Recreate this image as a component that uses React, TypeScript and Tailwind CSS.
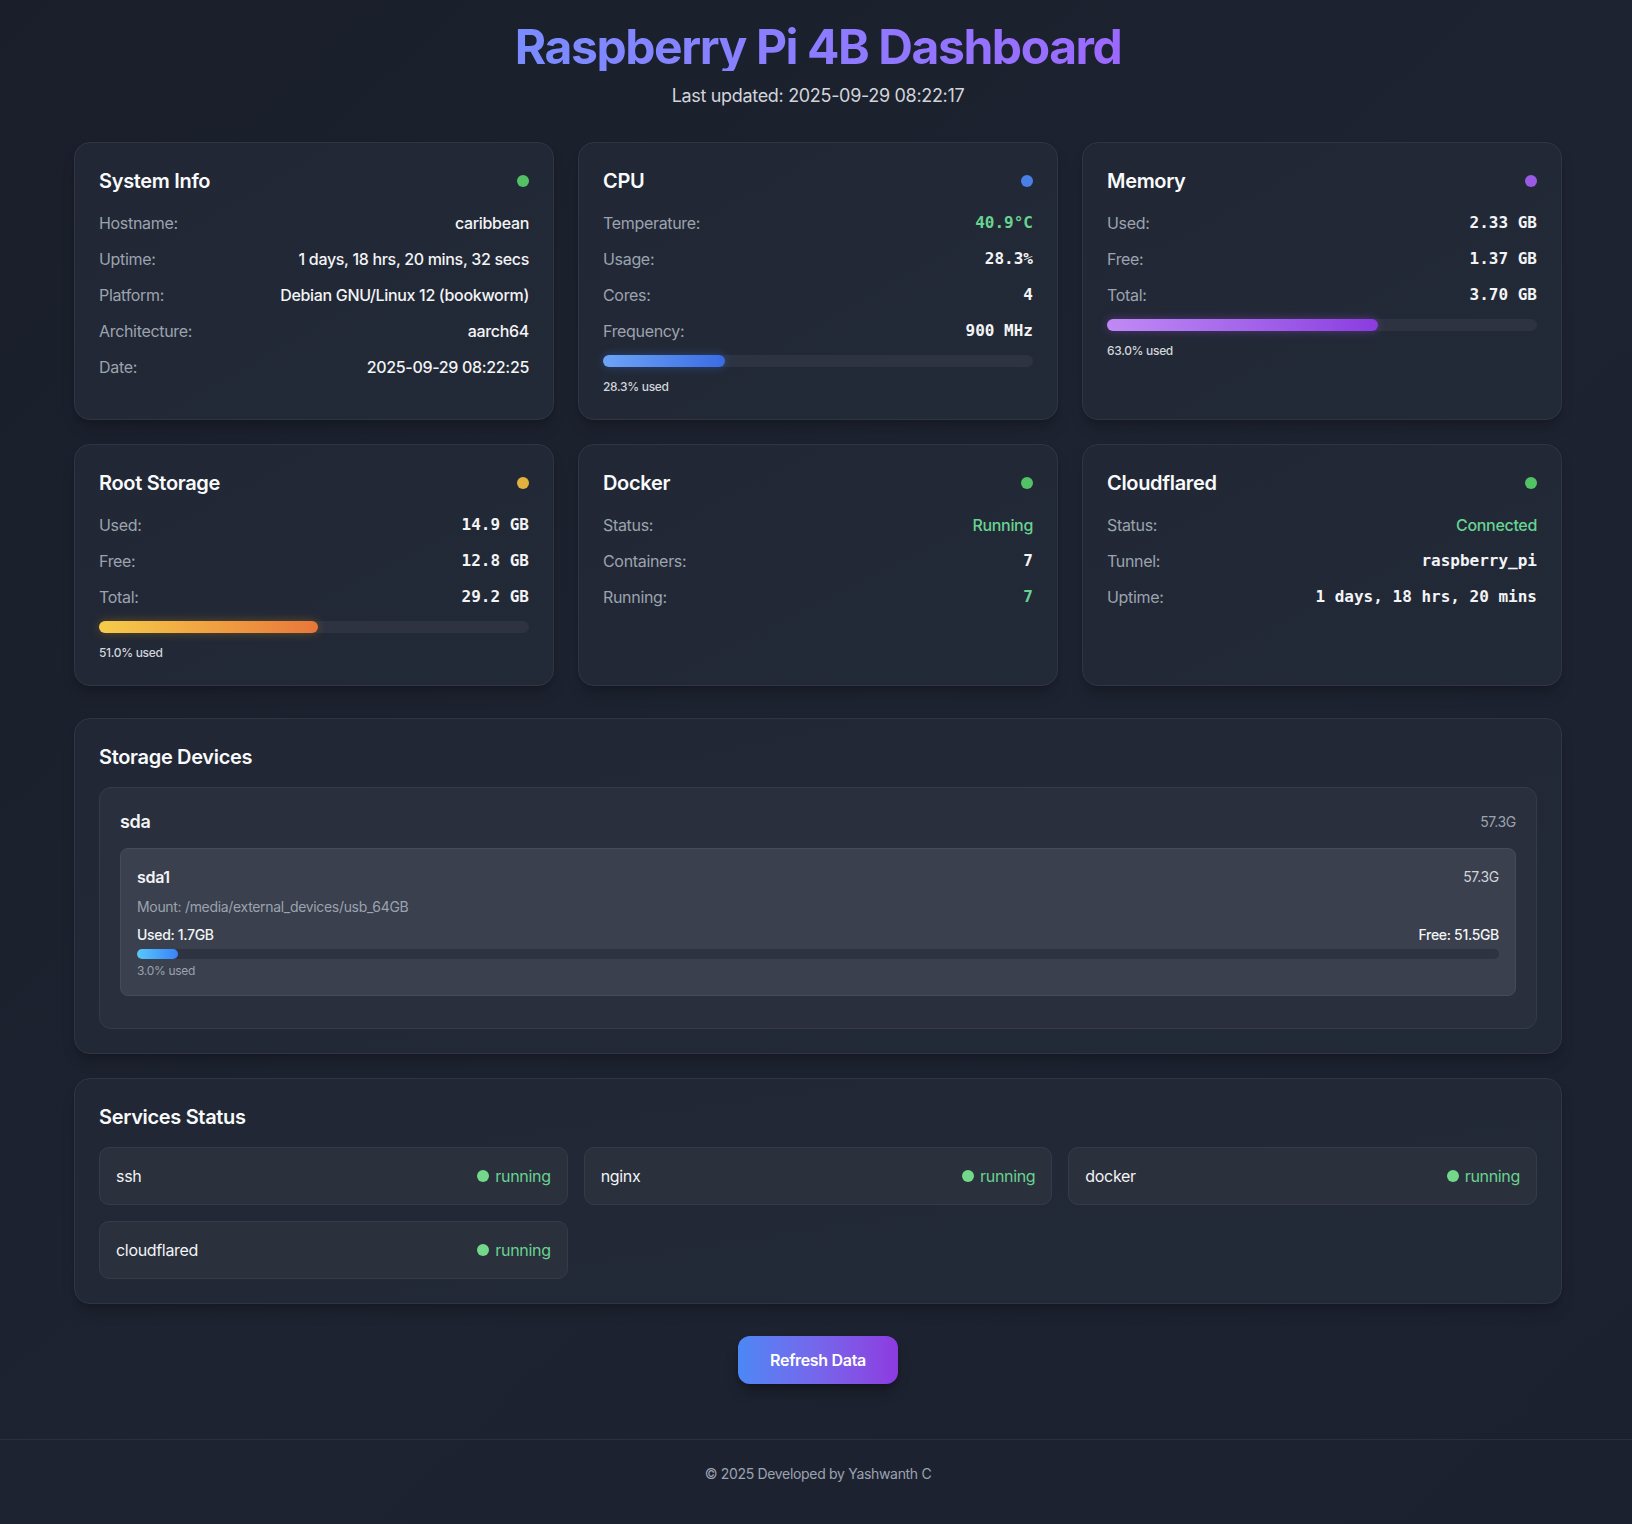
import React from "react";

type Row = { label: string; value: string; mono?: boolean; green?: boolean };

const Card = ({
  title,
  dot,
  rows,
  bar,
}: {
  title: string;
  dot: string;
  rows: Row[];
  bar?: { pct: number; fill: string; glow: string };
}) => {
  return (
    <div className="rounded-2xl border border-[#2f3542] bg-linear-to-br from-[#212734] to-[#232a37] p-6 shadow-lg shadow-black/20">
      <div className="mb-[10px] flex h-7 items-center justify-between">
        <h3 className="text-xl leading-7 font-semibold text-[#f9fafb]">{title}</h3>
        <span className={`h-3 w-3 rounded-full ${dot}`} />
      </div>
      {rows.map((r) => (
        <div key={r.label} className="flex h-9 items-center justify-between text-base">
          <span className="text-[#9ca3af]">{r.label}</span>
          <span
            className={
              (r.mono
                ? "font-['DejaVu_Sans_Mono',monospace] font-semibold tracking-normal "
                : "font-medium ") + (r.green ? "text-[#68d391]" : "text-[#f3f4f6]")
            }
          >
            {r.value}
          </span>
        </div>
      ))}
      {bar && (
        <>
          <div className="mt-1.5 h-3 w-full rounded-full bg-[#2d3341]">
            <div
              className={`h-3 rounded-full ${bar.fill} ${bar.glow}`}
              style={{ width: `${bar.pct}%` }}
            />
          </div>
          <div className="mt-3 text-xs leading-4 font-medium text-[#d1d5db]">
            {bar.pct.toFixed(1)}% used
          </div>
        </>
      )}
    </div>
  );
};

const services = ["ssh", "nginx", "docker", "cloudflared"];

export default function App() {
  return (
    <div className="min-h-screen bg-linear-to-br from-[#191e2a] via-[#1e2331] to-[#1c2130] font-['Inter','Noto_Sans',sans-serif] tracking-[-0.02em] text-[#f3f4f6]">
      <div className="pt-[23px] pr-[70px] pl-[74px]">
        <header className="mb-8 text-center">
          <h1 className="bg-linear-to-r from-blue-400 to-purple-500 bg-clip-text text-5xl leading-none font-bold tracking-[-0.03em] text-transparent">
            Raspberry Pi 4B Dashboard
          </h1>
          <p className="mt-[11px] text-lg leading-7 text-[#d1d5db]">
            Last updated: 2025-09-29 08:22:17
          </p>
        </header>

        <div className="grid grid-cols-3 gap-6">
          <Card
            title="System Info"
            dot="bg-[#52c265]"
            rows={[
              { label: "Hostname:", value: "caribbean" },
              { label: "Uptime:", value: "1 days, 18 hrs, 20 mins, 32 secs" },
              { label: "Platform:", value: "Debian GNU/Linux 12 (bookworm)" },
              { label: "Architecture:", value: "aarch64" },
              { label: "Date:", value: "2025-09-29 08:22:25" },
            ]}
          />
          <Card
            title="CPU"
            dot="bg-[#4a7fe8]"
            rows={[
              { label: "Temperature:", value: "40.9°C", mono: true, green: true },
              { label: "Usage:", value: "28.3%", mono: true },
              { label: "Cores:", value: "4", mono: true },
              { label: "Frequency:", value: "900 MHz", mono: true },
            ]}
            bar={{
              pct: 28.3,
              fill: "bg-linear-to-r from-[#6ea4f7] to-[#3b6be3]",
              glow: "shadow-[0_0_10px_rgba(59,130,246,0.35)]",
            }}
          />
          <Card
            title="Memory"
            dot="bg-[#9b5ae6]"
            rows={[
              { label: "Used:", value: "2.33 GB", mono: true },
              { label: "Free:", value: "1.37 GB", mono: true },
              { label: "Total:", value: "3.70 GB", mono: true },
            ]}
            bar={{
              pct: 63.0,
              fill: "bg-linear-to-r from-[#c08af5] to-[#8b3be0]",
              glow: "shadow-[0_0_10px_rgba(168,85,247,0.35)]",
            }}
          />
          <Card
            title="Root Storage"
            dot="bg-[#e2b33c]"
            rows={[
              { label: "Used:", value: "14.9 GB", mono: true },
              { label: "Free:", value: "12.8 GB", mono: true },
              { label: "Total:", value: "29.2 GB", mono: true },
            ]}
            bar={{
              pct: 51.0,
              fill: "bg-linear-to-r from-[#f5cc4a] to-[#e8763a]",
              glow: "shadow-[0_0_10px_rgba(245,158,11,0.3)]",
            }}
          />
          <Card
            title="Docker"
            dot="bg-[#52c265]"
            rows={[
              { label: "Status:", value: "Running", green: true },
              { label: "Containers:", value: "7", mono: true },
              { label: "Running:", value: "7", mono: true, green: true },
            ]}
          />
          <Card
            title="Cloudflared"
            dot="bg-[#52c265]"
            rows={[
              { label: "Status:", value: "Connected", green: true },
              { label: "Tunnel:", value: "raspberry_pi", mono: true },
              { label: "Uptime:", value: "1 days, 18 hrs, 20 mins", mono: true },
            ]}
          />
        </div>

        {/* storage devices */}
        <section className="mt-8 rounded-2xl border border-[#2f3542] bg-linear-to-br from-[#212734] to-[#232a37] p-6 shadow-lg shadow-black/20">
          <h2 className="mb-4 text-xl leading-7 font-semibold text-[#f9fafb]">Storage Devices</h2>
          <div className="rounded-xl border border-[#353b48] bg-[#292f3c] p-5">
            <div className="mb-3 flex items-center justify-between">
              <span className="text-lg leading-7 font-semibold">sda</span>
              <span className="text-sm text-[#9ca3af]">57.3G</span>
            </div>
            <div className="mb-3 rounded-lg border border-[#454b58] bg-[#3a404d] p-4">
              <div className="flex items-center justify-between">
                <span className="text-base leading-6 font-semibold">sda1</span>
                <span className="text-sm text-[#d1d5db]">57.3G</span>
              </div>
              <div className="mt-2 text-sm text-[#9ca3af]">
                Mount: /media/external_devices/usb_64GB
              </div>
              <div className="mt-2 flex justify-between text-sm font-medium">
                <span>Used: 1.7GB</span>
                <span>Free: 51.5GB</span>
              </div>
              <div className="mt-1 h-2.5 w-full rounded-full bg-[#2d3341]">
                <div
                  className="h-2.5 rounded-full bg-linear-to-r from-[#5ac8fa] to-[#3b82f6]"
                  style={{ width: "3%" }}
                />
              </div>
              <div className="mt-1 text-xs leading-4 text-[#9ca3af]">3.0% used</div>
            </div>
          </div>
        </section>

        {/* services */}
        <section className="mt-6 rounded-2xl border border-[#2f3542] bg-linear-to-br from-[#212734] to-[#232a37] p-6 shadow-lg shadow-black/20">
          <h2 className="mb-4 text-xl leading-7 font-semibold text-[#f9fafb]">Services Status</h2>
          <div className="grid grid-cols-3 gap-4">
            {services.map((s) => (
              <div
                key={s}
                className="flex items-center justify-between rounded-[10px] border border-[#353b48] bg-[#2a303c] p-4"
              >
                <span className="text-base leading-6">{s}</span>
                <span className="flex items-center gap-1.5 text-base text-[#68d391]">
                  <span className="h-3 w-3 rounded-full bg-[#72d98a]" />
                  running
                </span>
              </div>
            ))}
          </div>
        </section>

        <div className="mt-8 flex justify-center">
          <button className="rounded-xl bg-linear-to-r from-[#4b87f5] to-[#8c3ae0] px-8 py-3 text-base leading-6 font-semibold text-white shadow-lg shadow-black/30">
            Refresh Data
          </button>
        </div>
      </div>

      <footer className="mt-[55px] border-t border-[#2a303c] py-6 pl-1 text-center text-sm text-[#9ca3af]">
        © 2025 Developed by Yashwanth C
      </footer>
    </div>
  );
}
